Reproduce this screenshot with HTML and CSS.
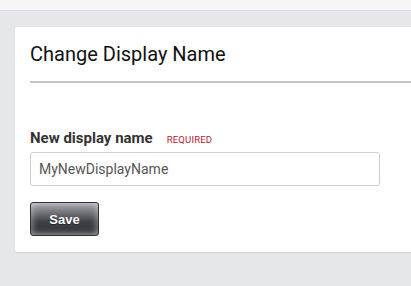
FILE: index.html
```html
<!DOCTYPE html>
<html>
<head>
<meta charset="utf-8">
<link rel="stylesheet" href="styles.css">
</head>
<body>
<div class="topbar"></div>
<main class="main">
  <section class="card">
    <header class="card-header">
      <h1 class="title">Change Display Name</h1>
    </header>
    <form class="card-body">
      <div class="label-row">
        <label class="label" for="dn">New display name</label>
        <span class="required">REQUIRED</span>
      </div>
      <input class="input" id="dn" type="text" value="MyNewDisplayName">
      <button class="btn" type="button">Save</button>
    </form>
  </section>
</main>
</body>
</html>
```
FILE: styles.css
```css
html, body {
  margin: 0;
  padding: 0;
  overflow: hidden;
}
body {
  background: #e6e7ea;
  font-family: Roboto, "Liberation Sans", sans-serif;
  width: 411px;
  height: 286px;
}
.topbar {
  height: 10px;
  background: #f6f6f6;
  border-bottom: 1px solid #dddee1;
}
.main {
  padding: 16px 0 0 15px;
}
.card {
  width: 430px;
  background: #fff;
  border-radius: 2px;
  box-shadow: 0 1px 1px rgba(0, 0, 0, 0.08);
}
.card-header {
  margin-left: 15px;
  padding: 16px 0 16px;
  border-bottom: 2px solid #c4c4c4;
}
.title {
  margin: 0;
  font-size: 20px;
  font-weight: 400;
  line-height: 22px;
  color: #111;
}
.card-body {
  margin: 0;
  padding: 45px 15px 16px;
  display: flex;
  flex-direction: column;
  align-items: flex-start;
}
.label-row {
  display: flex;
  align-items: baseline;
  gap: 14px;
  height: 20px;
  line-height: 20px;
  margin-bottom: 4px;
}
.label {
  font-size: 15px;
  font-weight: 700;
  color: #333;
}
.required {
  font-size: 9.5px;
  color: #b3202e;
  letter-spacing: 0.2px;
}
.input {
  box-sizing: border-box;
  width: 350px;
  height: 34px;
  border: 1px solid #cfcfcf;
  border-radius: 3px;
  padding: 0 8px;
  font-family: Roboto, "Liberation Sans", sans-serif;
  font-size: 14px;
  color: #555;
  margin: 0 0 16px;
}
.btn {
  box-sizing: border-box;
  width: 69px;
  height: 34px;
  border: 1px solid #2f3034;
  border-radius: 3px;
  background: linear-gradient(#acadb1 0%, #76777c 28%, #404147 58%, #3a3b41 80%, #56575c 100%);
  box-shadow: inset 3px 0 5px rgba(255, 255, 255, 0.25), inset -3px 0 5px rgba(255, 255, 255, 0.25);
  color: #fff;
  font-family: "Liberation Sans", Arial, sans-serif;
  font-weight: 700;
  font-size: 13px;
  text-shadow: 0 1px 1px rgba(0, 0, 0, 0.4);
  padding: 0;
}
```
